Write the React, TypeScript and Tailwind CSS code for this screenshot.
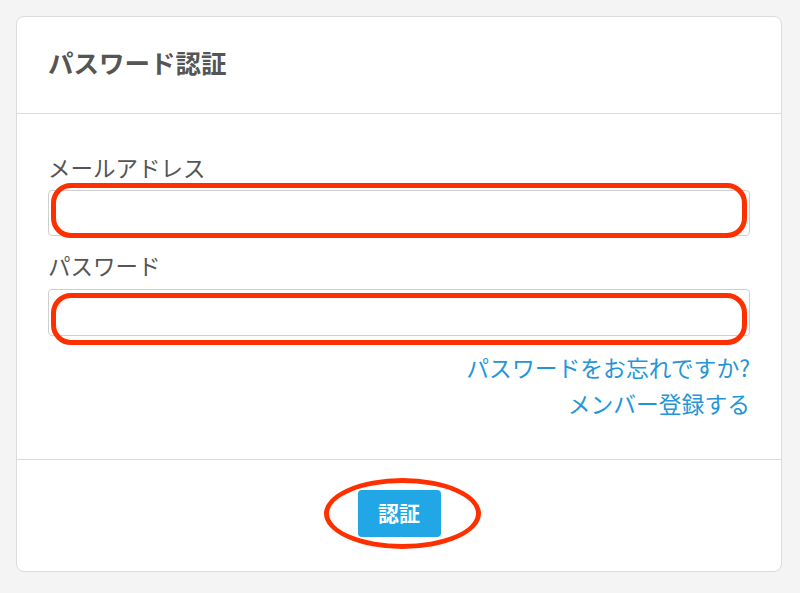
export default function App() {
  return (
    <div className="min-h-[593px] w-[800px] bg-[#f4f4f4] pt-[16px] pl-[16px]" style={{ fontFamily: '"Noto Sans CJK JP", "Noto Sans", sans-serif' }}>
      <div className="w-[766px] bg-white border border-[#dcdcdc] rounded-[8px]">
        {/* Header */}
        <div className="h-[97px] flex items-center px-[31px] pb-[5px] border-b border-[#dcdcdc]">
          <h1 className="text-[25.5px] font-bold text-[#555]">パスワード認証</h1>
        </div>

        {/* Body */}
        <div className="px-[31px] pt-[37px] pb-[37px]">
          <label className="block text-[22.5px] leading-[32px] text-[#555] mb-[7px]">メールアドレス</label>
          <div className="relative">
            <input type="email" className="block w-full h-[46px] border border-[#cfcfcf] rounded-[4px] bg-white" />
            <div className="absolute left-[3px] right-[3px] top-[-7px] bottom-[-2px] border-[5px] border-[#ff3000] rounded-[20px] pointer-events-none" />
          </div>

          <label className="block text-[22.5px] leading-[32px] text-[#555] mt-[13px] mb-[8px]">パスワード</label>
          <div className="relative">
            <input type="password" className="block w-full h-[47px] border border-[#cfcfcf] rounded-[4px] bg-white" />
            <div className="absolute left-[3px] right-[3px] top-[4px] bottom-[-9px] border-[5px] border-[#ff3000] rounded-[20px] pointer-events-none" />
          </div>

          <div className="mt-[14px] flex flex-col items-end text-[22.8px] leading-[36px] text-[#2496d8]">
            <a href="#" className="block">パスワードをお忘れですか?</a>
            <a href="#" className="block">メンバー登録する</a>
          </div>
        </div>

        {/* Footer */}
        <div className="h-[112px] border-t border-[#dcdcdc] flex items-center justify-center">
          <div className="relative mt-[-5px]">
            <button className="w-[83px] h-[47px] rounded-[4px] bg-[#22a7e6] text-white text-[21px] font-bold">認証</button>
            <div className="absolute left-[-34px] right-[-40px] top-[-12px] bottom-[-12px] border-[5px] border-[#ff3000] rounded-[50%] pointer-events-none" />
          </div>
        </div>
      </div>
    </div>
  )
}
